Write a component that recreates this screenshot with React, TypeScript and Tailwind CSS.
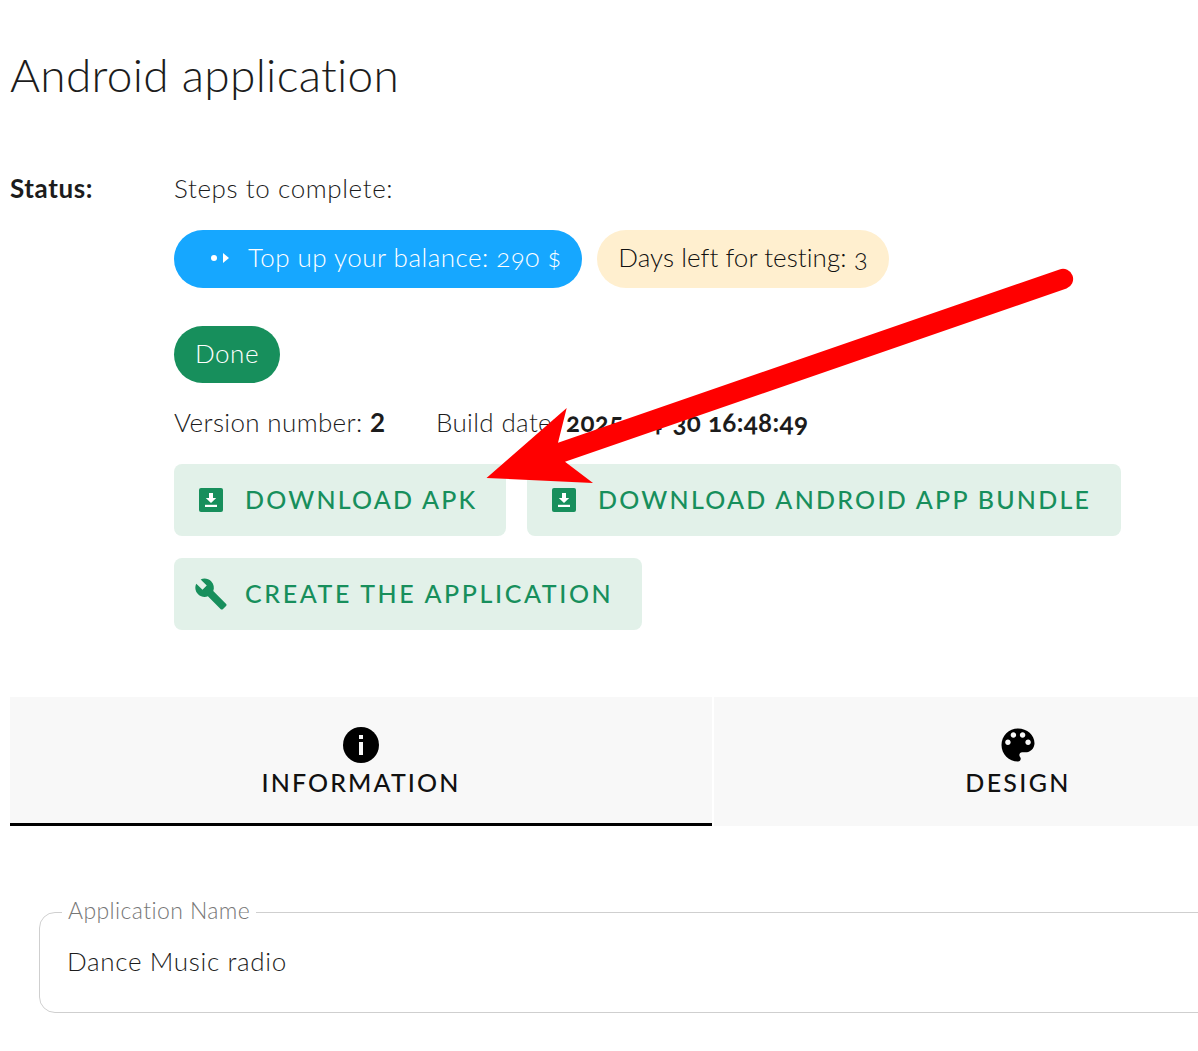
const font = { fontFamily: '"Lato", "Open Sans", sans-serif' };

function DownloadIcon() {
  return (
    <svg width="24" height="24" viewBox="0 0 24 24" className="shrink-0">
      <rect x="0" y="0" width="24" height="24" rx="2" fill="#178f5c" />
      <path d="M10 5h4v5h3.2L12 15l-5.2-5H10z" fill="#fff" />
      <rect x="6" y="16.8" width="12" height="2.2" fill="#fff" />
    </svg>
  );
}

function WrenchIcon() {
  return (
    <svg width="34" height="34" viewBox="0 0 24 24" className="shrink-0" fill="#178f5c">
      <path d="M22.7 19l-9.1-9.1c.9-2.3.4-5-1.5-6.9-2-2-5-2.4-7.4-1.3L9 6 6 9 1.6 4.7C.4 7.1.9 10.1 2.9 12.1c1.9 1.9 4.6 2.4 6.9 1.5l9.1 9.1c.4.4 1 .4 1.4 0l2.3-2.3c.5-.4.5-1.1.1-1.4z" />
    </svg>
  );
}

function ActionButton({ icon, label, width, tracking, inset }: { icon: React.ReactNode; label: string; width: string; tracking: string; inset: string }) {
  return (
    <div className={`flex h-[72px] items-center rounded-lg bg-[#e2f1e9] text-[25px] font-medium text-[#178f5c] ${width} ${tracking}`}>
      <span className={`flex w-[71px] shrink-0 ${inset}`}>{icon}</span>
      <span>{label}</span>
    </div>
  );
}

export default function App() {
  return (
    <div className="relative h-[1051px] w-[1198px] overflow-hidden bg-white pl-[10px] text-[#1c1c1c]" style={font}>
      <h1 className="pt-[45px] text-[46px] font-light leading-[60px] tracking-[0.3px]">Android application</h1>

      <div className="mt-[66px] flex">
        <div className="w-[164px] text-[26px] font-bold leading-[34px] tracking-[0.6px]">Status:</div>
        <div className="flex-1">
          <div className="text-[26px] font-light leading-[34px] tracking-[0.6px]">Steps to complete:</div>
          <div className="mt-[25px] flex gap-[15px]">
            <div className="flex h-[58px] w-[408px] items-center rounded-full bg-[#16a7ff] pb-[3px] text-[26px] font-light text-white">
              <svg width="22" height="14" viewBox="0 0 22 14" className="ml-[35px] mt-[3px] shrink-0" fill="#fff">
                <circle cx="5" cy="6" r="3" />
                <path d="M14 1l6 5-6 5z" />
              </svg>
              <span className="ml-[17px] oldstyle-nums tracking-[0.47px]">Top up your balance: 290 $</span>
            </div>
            <div className="flex h-[58px] w-[292px] items-center justify-center rounded-full bg-[#ffefcf] pb-[3px] text-[26px] font-light text-[#111]">
              <span className="oldstyle-nums tracking-[0.05px]">Days left for testing: 3</span>
            </div>
          </div>
          <div className="mt-[38px] flex h-[57px] w-[106px] items-center justify-center rounded-full bg-[#178f5c] pb-[2px] text-[26px] font-light tracking-[0.5px] text-white">Done</div>
          <div className="mt-[22px] flex text-[26px] font-light leading-[34px]">
            <div className="w-[262px] tracking-[0.35px]">Version number: <b className="font-bold">2</b></div>
            <div className="tracking-[0.35px]">Build date: <b className="font-bold oldstyle-nums">2025-04-30 16:48:49</b></div>
          </div>
          <div className="mt-[25px] flex gap-[21px]">
            <ActionButton icon={<DownloadIcon />} label="DOWNLOAD APK" width="w-[332px]" tracking="tracking-[2.2px]" inset="pl-[25px]" />
            <ActionButton icon={<DownloadIcon />} label="DOWNLOAD ANDROID APP BUNDLE" width="w-[594px]" tracking="tracking-[2.25px]" inset="pl-[25px]" />
          </div>
          <div className="mt-[22px] flex">
            <ActionButton icon={<WrenchIcon />} label="CREATE THE APPLICATION" width="w-[468px]" tracking="tracking-[2.6px]" inset="pl-[20px]" />
          </div>
        </div>
      </div>

      <div className="mt-[67px] flex w-[1400px] gap-[2px]">
        <div className="flex h-[129px] w-[702px] flex-col items-center border-b-[3px] border-black bg-[#f8f8f8]">
          <svg width="36" height="36" viewBox="0 0 36 36" className="mt-[30px]">
            <circle cx="18" cy="18" r="18" fill="#000" />
            <rect x="16" y="8" width="4" height="4" fill="#f8f8f8" />
            <rect x="16" y="15" width="4" height="13" fill="#f8f8f8" />
          </svg>
          <div className="mt-[1px] text-[25px] font-medium leading-[36px] tracking-[2.1px] text-[#111]">INFORMATION</div>
        </div>
        <div className="flex h-[129px] w-[608px] flex-col items-center bg-[#f8f8f8]">
          <svg width="44" height="44" viewBox="0 0 24 24" className="mt-[26px]" fill="#000">
            <path d="M12 3c-4.97 0-9 4.03-9 9s4.03 9 9 9c.83 0 1.5-.67 1.5-1.5 0-.39-.15-.74-.39-1.01-.23-.26-.38-.61-.38-.99 0-.83.67-1.5 1.5-1.5H16c2.76 0 5-2.24 5-5 0-4.42-4.03-8-9-8zm-5.5 9c-.83 0-1.5-.67-1.5-1.5S5.67 9 6.5 9 8 9.67 8 10.5 7.33 12 6.5 12zm3-4C8.67 8 8 7.33 8 6.5S8.67 5 9.5 5s1.5.67 1.5 1.5S10.33 8 9.5 8zm5 0c-.83 0-1.5-.67-1.5-1.5S13.67 5 14.5 5s1.5.67 1.5 1.5S15.33 8 14.5 8zm3 4c-.83 0-1.5-.67-1.5-1.5S16.67 9 17.5 9s1.5.67 1.5 1.5-.67 1.5-1.5 1.5z" />
          </svg>
          <div className="-mt-[3px] text-[25px] font-medium leading-[36px] tracking-[2.3px] text-[#111]">DESIGN</div>
        </div>
      </div>

      <fieldset className="ml-[29px] mt-[71px] h-[116px] w-[1300px] rounded-[16px] border border-[#cfcfcf] pl-[22px]">
        <legend className="px-[6px] pb-[4px] text-[23px] font-light leading-[26px] tracking-[0.4px] text-[#777]">Application Name</legend>
        <div className="pl-[5px] pt-[17px] text-[26px] font-light leading-[34px] tracking-[0.65px]">Dance Music radio</div>
      </fieldset>

      <svg className="pointer-events-none absolute left-0 top-0" width="1198" height="1051" viewBox="0 0 1198 1051">
        <path d="M486.5 478L566.7 408L558 442.7L1059.5 269.5A10 10 0 0 1 1066.5 288.5L565 461.7L593 483Z" fill="#ff0000" />
      </svg>
    </div>
  );
}
